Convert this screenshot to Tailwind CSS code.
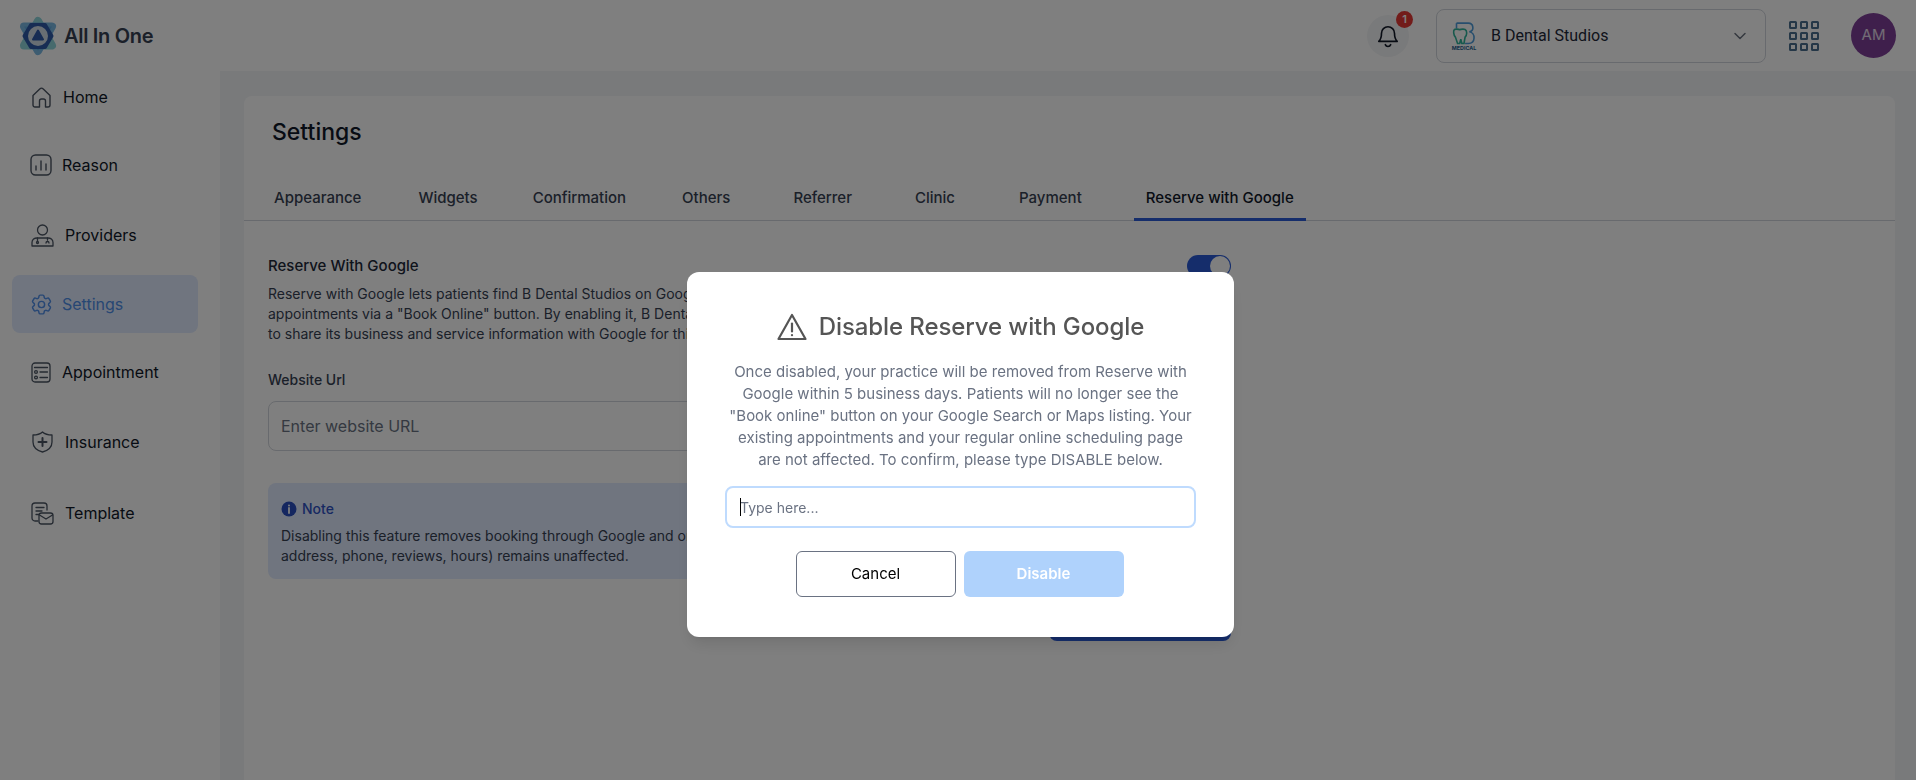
<!DOCTYPE html>
<html lang="en">

<head>
  <meta charset="UTF-8">
  <meta name="viewport" content="width=device-width, initial-scale=1.0">
  <script src="https://cdn.jsdelivr.net/npm/@tailwindcss/browser@4"></script>
  <title>Settings</title>
</head>

<body class="h-[780px] overflow-hidden bg-white font-[Inter,sans-serif] text-gray-900">
  <!-- Top bar -->
  <header class="flex h-[71px] items-center bg-white pl-[18px]">
    <svg class="h-[44px] w-[40px] shrink-0" viewBox="0 0 40 44">
      <path d="M20 7 34 31.500H6Z" fill="#8fd4da" stroke="#8fd4da" stroke-width="8" stroke-linejoin="round" />
      <path d="M20 37 34 12.500H6Z" fill="#5aa6dc" fill-opacity="0.8" stroke="#5aa6dc" stroke-opacity="0.8" stroke-width="8" stroke-linejoin="round" />
      <path d="M6.500 22 13 11h14l6.500 11L27 33H13Z" fill="#2f5aa8" stroke="#2f5aa8" stroke-width="4" stroke-linejoin="round" />
      <circle cx="20" cy="22" r="10" fill="#d0dde6" />
      <path d="M20 16.500 25 25.500H15Z" fill="#2f5aa8" stroke="#2f5aa8" stroke-width="2" stroke-linejoin="round" />
    </svg>
    <span class="ml-[6px] text-[20px] font-semibold tracking-[-0.3px] text-gray-700">All In One</span>

    <div class="ml-auto flex items-center">
      <!-- Notifications -->
      <div class="relative flex h-[42px] w-[42px] items-center justify-center rounded-full bg-gray-100">
        <svg class="h-[26px] w-[26px]" viewBox="0 0 24 24" fill="none" stroke="#111827" stroke-width="1.500" stroke-linecap="round" stroke-linejoin="round">
          <path d="M6 9.500a6 6 0 0 1 12 0c0 4 1 6 2.500 7.500H3.500C5 15.500 6 13.500 6 9.500Z" />
          <path d="M9.500 20a2.700 2.700 0 0 0 5 0" />
        </svg>
        <span class="absolute right-[-4px] top-[-4px] flex h-[17px] w-[17px] items-center justify-center rounded-full bg-[#e53935] text-[11px] font-semibold text-white">1</span>
      </div>

      <!-- Practice selector -->
      <div class="ml-[27px] flex h-[54px] w-[330px] items-center rounded-lg border border-gray-300 pl-[12px] pr-[17px]">
        <svg class="h-[30px] w-[30px]" viewBox="0 0 28 28" fill="none" stroke-width="1.500">
          <path d="M7 2h11c5 0 6 7 1 8 6 1 6 11-1 11h-3" stroke="#4f9ddb" />
          <path d="M7 2v5" stroke="#4f9ddb" />
          <path d="M5 8c2-1 4 0 5 0s3-1 5 0 2 5 0 7l-1 6h-2l-1-4-1 4H8l-2-6c-2-2-2-6-1-7Z" stroke="#2fb39a" />
          <text x="14" y="27" text-anchor="middle" font-size="5" font-weight="700" fill="#1f5f8f" stroke="none" font-family="Inter">MEDICAL</text>
        </svg>
        <span class="ml-[12px] font-[Roboto,sans-serif] text-[16px] text-gray-800">B Dental Studios</span>
        <svg class="ml-auto h-[16px] w-[16px]" viewBox="0 0 16 16" fill="none" stroke="#6b7280" stroke-width="1.500" stroke-linecap="round" stroke-linejoin="round">
          <path d="M3 5.500l5 5 5-5" />
        </svg>
      </div>

      <!-- Apps -->
      <div class="ml-[23px] grid grid-cols-3 gap-[3px]">
        <span class="h-[8px] w-[8px] rounded-[1.500px] border-2 border-[#4a6f8f]"></span>
        <span class="h-[8px] w-[8px] rounded-[1.500px] border-2 border-[#4a6f8f]"></span>
        <span class="h-[8px] w-[8px] rounded-[1.500px] border-2 border-[#4a6f8f]"></span>
        <span class="h-[8px] w-[8px] rounded-[1.500px] border-2 border-[#4a6f8f]"></span>
        <span class="h-[8px] w-[8px] rounded-[1.500px] border-2 border-[#4a6f8f]"></span>
        <span class="h-[8px] w-[8px] rounded-[1.500px] border-2 border-[#4a6f8f]"></span>
        <span class="h-[8px] w-[8px] rounded-[1.500px] border-2 border-[#4a6f8f]"></span>
        <span class="h-[8px] w-[8px] rounded-[1.500px] border-2 border-[#4a6f8f]"></span>
        <span class="h-[8px] w-[8px] rounded-[1.500px] border-2 border-[#4a6f8f]"></span>
      </div>

      <div class="ml-[32px] mr-[20px] flex h-[45px] w-[45px] items-center justify-center rounded-full bg-[#7e3f98] text-[15px] text-white/80">AM</div>
    </div>
  </header>

  <div class="flex h-[709px]">
    <!-- Sidebar -->
    <nav class="-mt-[3px] w-[220px] shrink-0 pl-[12px] pr-[22px] text-[16px] text-gray-900">
      <a class="flex h-[58px] items-center rounded-lg pl-[20px]">
        <svg class="h-[21px] w-[19px]" viewBox="0 0 19 21" fill="none" stroke="#4b5563" stroke-width="1.400" stroke-linejoin="round">
          <path d="M1 8.500 8 1.800a2 2 0 0 1 3 0l7 6.700V18a2 2 0 0 1-2 2h-2.500v-6a2 2 0 0 0-2-2h-2a2 2 0 0 0-2 2v6H3a2 2 0 0 1-2-2Z" />
        </svg>
        <span class="ml-[12px]">Home</span>
      </a>
      <a class="mt-[10px] flex h-[58px] items-center rounded-lg pl-[18px]">
        <svg class="h-[22px] w-[22px]" viewBox="0 0 22 22" fill="none" stroke="#4b5563" stroke-width="1.400" stroke-linecap="round">
          <rect x="1" y="1" width="20" height="20" rx="4.500" />
          <path d="M6 12v4M11 7v9M16 10v6" />
        </svg>
        <span class="ml-[10px]">Reason</span>
      </a>
      <a class="mt-[12px] flex h-[58px] items-center rounded-lg pl-[19px]">
        <svg class="h-[23px] w-[23px]" viewBox="0 0 23 23" fill="none" stroke="#4b5563" stroke-width="1.300" stroke-linecap="round" stroke-linejoin="round">
          <circle cx="11.500" cy="6" r="5" />
          <path d="M1 22v-3.500c0-3 2.500-4.500 5-4.500h11c2.500 0 5 1.500 5 4.500V22Z" />
          <path d="M6.500 14v3M16.500 14v2M15 19c0-2 3-2 3 0" />
          <circle cx="6.500" cy="18.500" r="1" />
        </svg>
        <span class="ml-[11px]">Providers</span>
      </a>
      <a class="mt-[11px] flex h-[58px] items-center rounded-lg bg-[#e0eaff] pl-[17px] text-[#4f8ee8]">
        <svg class="h-[25px] w-[25px]" viewBox="0 0 24 24" fill="none" stroke="#4f8ee8" stroke-width="1.400" stroke-linecap="round" stroke-linejoin="round">
          <path d="M9.594 3.940c.09-.542.56-.94 1.110-.94h2.593c.55 0 1.020.398 1.110.94l.213 1.281c.063.374.313.686.645.870.074.04.147.083.22.127.325.196.72.257 1.075.124l1.217-.456a1.125 1.125 0 0 1 1.370.49l1.296 2.247a1.125 1.125 0 0 1-.26 1.431l-1.003.827c-.293.241-.438.613-.43.992a7.723 7.723 0 0 1 0 .255c-.008.378.137.75.43.991l1.004.827c.424.35.534.955.26 1.430l-1.298 2.247a1.125 1.125 0 0 1-1.369.491l-1.217-.456c-.355-.133-.75-.072-1.076.124a6.470 6.470 0 0 1-.22.128c-.331.183-.581.495-.644.869l-.213 1.281c-.09.543-.56.94-1.110.94h-2.594c-.55 0-1.019-.398-1.110-.94l-.213-1.281c-.062-.374-.312-.686-.644-.87a6.520 6.520 0 0 1-.22-.127c-.325-.196-.72-.257-1.076-.124l-1.217.456a1.125 1.125 0 0 1-1.369-.49l-1.297-2.247a1.125 1.125 0 0 1 .26-1.431l1.004-.827c.292-.24.437-.613.43-.991a6.932 6.932 0 0 1 0-.255c.007-.38-.138-.751-.43-.992l-1.004-.827a1.125 1.125 0 0 1-.26-1.430l1.297-2.247a1.125 1.125 0 0 1 1.370-.491l1.216.456c.356.133.751.072 1.076-.124.072-.044.146-.086.22-.128.332-.183.582-.495.644-.869l.214-1.280Z" />
          <circle cx="12" cy="12" r="3" />
        </svg>
        <span class="ml-[8px]">Settings</span>
      </a>
      <a class="mt-[10px] flex h-[58px] items-center rounded-lg pl-[19px]">
        <svg class="h-[21px] w-[20px]" viewBox="0 0 20 21" fill="none" stroke="#4b5563" stroke-width="1.300" stroke-linecap="round">
          <rect x="1" y="1" width="18" height="19" rx="3" />
          <path d="M3.500 5.500h13M9 10h7.500M9 15.500h7.500" />
          <circle cx="5" cy="10" r="1.400" />
          <circle cx="5" cy="15.500" r="1.400" />
        </svg>
        <span class="ml-[11px]">Appointment</span>
      </a>
      <a class="mt-[12px] flex h-[58px] items-center rounded-lg pl-[20px]">
        <svg class="h-[22px] w-[21px]" viewBox="0 0 21 22" fill="none" stroke="#4b5563" stroke-width="1.300" stroke-linejoin="round">
          <path d="M10.500 1c2 1.800 5.500 3 9.500 3v7c0 5-4 8.500-9.500 10C5 19.500 1 16 1 11V4c4 0 7.500-1.200 9.500-3Z" />
          <path d="M10.500 7v8M6.500 11h8" stroke-width="2" stroke-linecap="round" />
        </svg>
        <span class="ml-[12px]">Insurance</span>
      </a>
      <a class="mt-[13px] flex h-[58px] items-center rounded-lg pl-[19px]">
        <svg class="h-[23px] w-[23px]" viewBox="0 0 23 23" fill="none" stroke="#4b5563" stroke-width="1.300" stroke-linecap="round" stroke-linejoin="round">
          <path d="M7 19H4a3 3 0 0 1-3-3V4a3 3 0 0 1 3-3h9a3 3 0 0 1 3 3v4" />
          <path d="M5 5.500h8M5 9h6M5 12.500h3" />
          <rect x="8" y="11" width="14" height="11" rx="2.500" />
          <path d="M8.500 13l6.500 4 6.500-4" />
        </svg>
        <span class="ml-[11px]">Template</span>
      </a>
    </nav>

    <!-- Main -->
    <main class="flex-1 bg-[#f3f4f7] pl-[24px] pr-[21px] pt-[25px]">
      <section class="h-[700px] rounded-lg bg-white">
        <h1 class="pl-[28px] pt-[20px] text-[23px] leading-[32px] font-[450] text-gray-900">Settings</h1>

        <div class="mt-[30px] flex h-[43px] border-b border-gray-300 pl-[18px] text-[15px] font-[450] text-gray-700">
          <a class="flex h-[43px] items-center px-[12px] pb-[3px]">Appearance</a>
          <a class="ml-[33px] flex h-[43px] items-center px-[12px] pb-[3px]">Widgets</a>
          <a class="ml-[31px] flex h-[43px] items-center px-[12px] pb-[3px]">Confirmation</a>
          <a class="ml-[32px] flex h-[43px] items-center px-[12px] pb-[3px]">Others</a>
          <a class="ml-[39px] flex h-[43px] items-center px-[12px] pb-[3px]">Referrer</a>
          <a class="ml-[39px] flex h-[43px] items-center px-[12px] pb-[3px]">Clinic</a>
          <a class="ml-[40px] flex h-[43px] items-center px-[12px] pb-[3px]">Payment</a>
          <a class="ml-[40px] flex h-[43px] items-center border-b-[3px] border-[#2a5bd7] px-[12px] text-gray-900">Reserve with Google</a>
        </div>

        <div class="w-[987px] pl-[24px] pt-[34px]">
          <div class="flex items-start justify-between">
            <h2 class="text-[15px] leading-[22px] font-[450] text-gray-800">Reserve With Google</h2>
            <span class="flex h-[22px] w-[44px] items-center justify-end rounded-full bg-[#2a5bd7] pr-[1px]">
              <span class="h-[20px] w-[20px] rounded-full bg-white"></span>
            </span>
          </div>
          <p class="mt-[7px] text-[14px] leading-[20px] text-gray-700">Reserve with Google lets patients find B Dental Studios on Google Search and Maps and book<br>appointments via a "Book Online" button. By enabling it, B Dental Studios authorizes All In One<br>to share its business and service information with Google for this purpose.</p>

          <label class="mt-[26px] block text-[14px] leading-[20px] font-[450] text-gray-700">Website Url</label>
          <input type="text" placeholder="Enter website URL" class="mt-[11px] h-[50px] w-full rounded-lg border border-gray-300 px-[12px] text-[16px] placeholder:text-gray-500">

          <div class="mt-[32px] h-[96px] rounded-lg bg-[#e0eaff] px-[13px] pt-[17px]">
            <div class="flex items-center gap-[5px] text-[14px] leading-[18px] font-medium text-[#2f52c4]">
              <svg class="h-[16px] w-[16px]" viewBox="0 0 16 16">
                <circle cx="8" cy="8" r="7.500" fill="#2a4fc0" />
                <circle cx="8" cy="4.600" r="1" fill="#fff" />
                <path d="M8 7v5" stroke="#fff" stroke-width="1.800" stroke-linecap="round" />
              </svg>
              Note
            </div>
            <p class="mt-[8px] text-[14px] leading-[20px] text-gray-700">Disabling this feature removes booking through Google and online scheduling links. Your business profile (name,<br>address, phone, reviews, hours) remains unaffected.</p>
          </div>

          <div class="mt-[18px] flex justify-end">
            <button class="h-[44px] w-[182px] rounded-lg bg-[#2a5bd7] text-[14px] font-medium text-white">Save</button>
          </div>
        </div>
      </section>
    </main>
  </div>

  <!-- Dimmed backdrop -->
  <div class="fixed inset-0 bg-black/50"></div>

  <!-- Confirm dialog -->
  <div class="fixed left-[687px] top-[272px] h-[365px] w-[547px] rounded-xl bg-white px-[38px] pt-[36px] shadow-lg">
    <div class="flex items-center justify-center gap-[12px]">
      <svg class="h-[30px] w-[30px]" viewBox="0 0 30 30" fill="none" stroke="#555555" stroke-width="2.200" stroke-linejoin="round" stroke-linecap="round">
        <path d="M15 3 28.500 27h-27Z" />
        <path d="M15 11.500v8" />
        <path d="M15 23v.2" />
      </svg>
      <h2 class="text-[24px] leading-[38px] font-[450] tracking-[-0.1px] text-[#555555]">Disable Reserve with Google</h2>
    </div>
    <p class="mt-[15px] text-center text-[15px] leading-[22px] text-gray-500">Once disabled, your practice will be removed from Reserve with<br>Google within 5 business days. Patients will no longer see the<br>"Book online" button on your Google Search or Maps listing. Your<br>existing appointments and your regular online scheduling page<br>are not affected. To confirm, please type DISABLE below.</p>

    <div class="relative mt-[15px]">
      <input type="text" placeholder="Type here..." class="h-[42px] w-full rounded-lg border-2 border-[#bfdbfe] px-[13px] text-[14px] placeholder:text-gray-500">
      <span class="absolute left-[15px] top-[12px] h-[18px] w-px bg-black"></span>
    </div>

    <div class="mt-[23px] flex justify-center gap-[8px] pr-[2px]">
      <button class="h-[46px] w-[160px] rounded-md border border-gray-500 bg-white text-[15px] text-black">Cancel</button>
      <button class="h-[46px] w-[160px] rounded-md bg-[#afd2fc] text-[15px] font-semibold text-white">Disable</button>
    </div>
  </div>
</body>

</html>
